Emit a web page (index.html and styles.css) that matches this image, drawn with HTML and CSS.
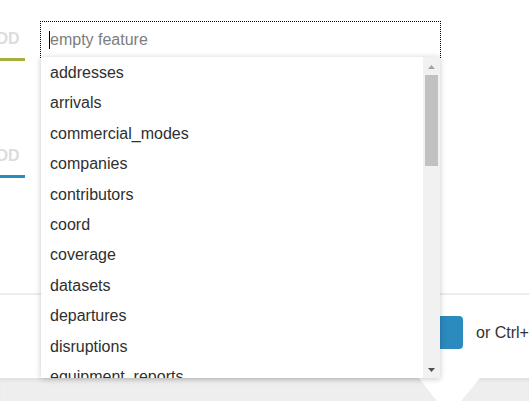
FILE: index.html
```html
<!DOCTYPE html>
<html lang="en">
<head>
<meta charset="utf-8">
<title>Feature picker</title>
<link rel="stylesheet" href="styles.css">
</head>
<body>
<div class="page">
  <div class="main">
    <div class="tabs">
      <div class="tab tab-green"><span class="tab-label">ADD</span></div>
      <div class="tab tab-blue"><span class="tab-label">ADD</span></div>
    </div>
    <div class="field">
      <div class="input"><span class="caret"></span><span class="placeholder">empty feature</span></div>
      <div class="dropdown">
        <ul class="options">
          <li>addresses</li>
          <li>arrivals</li>
          <li>commercial_modes</li>
          <li>companies</li>
          <li>contributors</li>
          <li>coord</li>
          <li>coverage</li>
          <li>datasets</li>
          <li>departures</li>
          <li>disruptions</li>
          <li>equipment_reports</li>
          <li>events</li>
        </ul>
        <div class="scrollbar">
          <div class="sb-btn sb-up"><svg width="7" height="4" viewBox="0 0 7 4"><polygon points="0,4 7,4 3.5,0" fill="#a3a3a3"/></svg></div>
          <div class="sb-thumb"></div>
          <div class="sb-space"></div>
          <div class="sb-btn sb-down"><svg width="7" height="4" viewBox="0 0 7 4"><polygon points="0,0 7,0 3.5,4" fill="#505050"/></svg></div>
        </div>
      </div>
    </div>
  </div>
  <div class="divider"></div>
  <div class="actions">
    <button class="submit" type="button"></button>
    <span class="hint">or Ctrl+Enter</span>
  </div>
  <div class="footer"><div class="notch"></div></div>
</div>
</body>
</html>
```
FILE: styles.css
```css
html, body {
  margin: 0;
  padding: 0;
  background: #fff;
}
body {
  font-family: "Liberation Sans", Arial, sans-serif;
  font-size: 16px;
  color: #333;
}
.page {
  width: 529px;
  height: 401px;
  overflow: hidden;
  display: flex;
  flex-direction: column;
}
.main {
  height: 293px;
  box-sizing: border-box;
  padding-top: 21px;
  display: flex;
  flex-shrink: 0;
}
.tabs {
  width: 25px;
  padding-top: 9px;
  flex-shrink: 0;
}
.tab {
  width: 25px;
  line-height: 18px;
  font-weight: bold;
  color: #dcdcdc;
  padding-bottom: 10px;
  border-bottom: 3px solid;
  white-space: nowrap;
}
.tab-label {
  display: block;
  margin-left: -15px;
}
.tab-green { border-bottom-color: #a8ae3b; }
.tab-blue { border-bottom-color: #2b8bbe; margin-top: 86px; }

.field {
  margin-left: 15px;
  width: 401px;
  position: relative;
  align-self: flex-start;
}
.input {
  height: 37px;
  box-sizing: border-box;
  border: 1px dotted #000;
  padding: 0 8px;
  display: flex;
  align-items: center;
  background: #fff;
}
.caret {
  width: 1px;
  height: 18px;
  background: #000;
}
.placeholder {
  color: #7d7d7d;
  line-height: 18px;
}
.dropdown {
  position: absolute;
  top: 36px;
  left: 1px;
  width: 399px;
  height: 321px;
  background: #fff;
  box-shadow: 0 1px 6px rgba(0, 0, 0, 0.22);
  display: flex;
  z-index: 2;
}
.options {
  flex: 1;
  list-style: none;
  margin: 0;
  padding: 1px 0 0;
  overflow: hidden;
}
.options li {
  padding: 6px 9px;
  line-height: 18.4px;
  color: #2f2f2f;
  white-space: nowrap;
}
.scrollbar {
  width: 17px;
  background: #f1f1f1;
  display: flex;
  flex-direction: column;
  flex-shrink: 0;
}
.sb-btn {
  height: 17px;
  display: flex;
  align-items: center;
  justify-content: center;
}
.sb-up { height: 18px; }
.sb-up svg { margin-top: 1px; }
.sb-thumb {
  height: 91px;
  margin: 0 2px;
  background: #c1c1c1;
}
.sb-space { flex: 1; }

.divider {
  height: 2px;
  background: #ededed;
  flex-shrink: 0;
}
.actions {
  height: 83px;
  box-sizing: border-box;
  padding: 21px 0 0 363px;
  display: flex;
  align-items: flex-start;
  gap: 13px;
  flex-shrink: 0;
}
.submit {
  width: 100px;
  height: 33px;
  border: none;
  border-radius: 4px;
  background: #2b8bbe;
  flex-shrink: 0;
  padding: 0;
}
.hint {
  line-height: 33px;
  white-space: nowrap;
  color: #333;
}
.footer {
  height: 23px;
  background: #eeeeee;
  box-shadow: inset 0 4px 4px -2px rgba(0, 0, 0, 0.07);
  display: flex;
  padding-left: 419px;
  flex-shrink: 0;
}
.notch {
  width: 61px;
  height: 23px;
  background: #fff;
  clip-path: polygon(0 0, 100% 0, 69% 100%, 29% 100%);
}
```
